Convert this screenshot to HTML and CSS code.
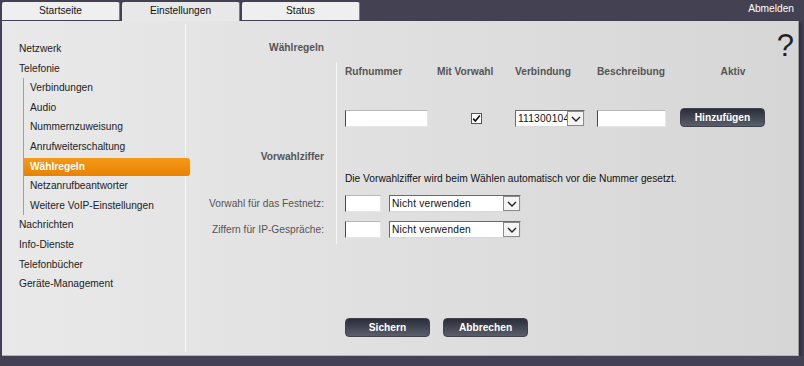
FILE: index.html
```html
<!DOCTYPE html>
<html lang="de">

<head>
    <meta charset="UTF-8">
    <title>Wählregeln</title>
    <link rel="stylesheet" href="styles.css">
</head>

<body>
    <div class="topbar">
        <nav class="tabs">
            <a class="tab">Startseite</a>
            <a class="tab tab--active">Einstellungen</a>
            <a class="tab">Status</a>
        </nav>
        <a class="logout">Abmelden</a>
    </div>

    <div class="panel">
        <aside class="sidebar">
            <ul class="menu">
                <li>Netzwerk</li>
                <li>Telefonie
                    <ul class="submenu">
                        <li>Verbindungen</li>
                        <li>Audio</li>
                        <li>Nummernzuweisung</li>
                        <li>Anrufweiterschaltung</li>
                        <li class="active">Wählregeln</li>
                        <li>Netzanrufbeantworter</li>
                        <li>Weitere VoIP-Einstellungen</li>
                    </ul>
                </li>
                <li>Nachrichten</li>
                <li>Info-Dienste</li>
                <li>Telefonbücher</li>
                <li>Geräte-Management</li>
            </ul>
        </aside>

        <main class="content">
            <span class="help">?</span>

            <div class="form-row row-title">
                <div class="label bold">Wählregeln</div>
                <div class="field plain"></div>
            </div>

            <!-- dial rules table -->
            <div class="form-row row-rules">
                <div class="label"></div>
                <div class="field rules">
                    <div class="rules__head">
                        <span>Rufnummer</span>
                        <span>Mit Vorwahl</span>
                        <span>Verbindung</span>
                        <span>Beschreibung</span>
                        <span class="center">Aktiv</span>
                    </div>
                    <div class="rules__entry">
                        <span><input class="text-input w-number" type="text"></span>
                        <span class="center">
                            <span class="checkbox">
                                <svg width="9" height="9" viewBox="0 0 9 9">
                                    <path d="M1.2 4.6 L3.4 7 L7.8 1.6" fill="none" stroke="#111" stroke-width="1.6" />
                                </svg>
                            </span>
                        </span>
                        <span>
                            <span class="select w-line">
                                <span class="select__value">111300104</span>
                                <span class="select__arrow">
                                    <svg width="10" height="6" viewBox="0 0 10 6">
                                        <path d="M1 1 L5 5 L9 1" fill="none" stroke="#222" stroke-width="1.4" />
                                    </svg>
                                </span>
                            </span>
                        </span>
                        <span><input class="text-input w-desc" type="text"></span>
                        <span><button class="btn btn--add">Hinzufügen</button></span>
                    </div>
                </div>
            </div>

            <div class="form-row row-section">
                <div class="label bold">Vorwahlziffer</div>
                <div class="field"></div>
            </div>

            <div class="form-row row-note">
                <div class="label"></div>
                <div class="field note">Die Vorwahlziffer wird beim Wählen automatisch vor die Nummer gesetzt.</div>
            </div>

            <div class="form-row row-setting">
                <div class="label">Vorwahl für das Festnetz:</div>
                <div class="field">
                    <input class="text-input w-digit" type="text">
                    <span class="select w-option">
                        <span class="select__value">Nicht verwenden</span>
                        <span class="select__arrow">
                            <svg width="10" height="6" viewBox="0 0 10 6">
                                <path d="M1 1 L5 5 L9 1" fill="none" stroke="#222" stroke-width="1.4" />
                            </svg>
                        </span>
                    </span>
                </div>
            </div>

            <div class="form-row row-setting">
                <div class="label">Ziffern für IP-Gespräche:</div>
                <div class="field">
                    <input class="text-input w-digit" type="text">
                    <span class="select w-option">
                        <span class="select__value">Nicht verwenden</span>
                        <span class="select__arrow">
                            <svg width="10" height="6" viewBox="0 0 10 6">
                                <path d="M1 1 L5 5 L9 1" fill="none" stroke="#222" stroke-width="1.4" />
                            </svg>
                        </span>
                    </span>
                </div>
            </div>

            <div class="form-row row-actions">
                <div class="label"></div>
                <div class="field plain actions">
                    <button class="btn">Sichern</button>
                    <button class="btn">Abbrechen</button>
                </div>
            </div>
        </main>
    </div>
</body>

</html>
```

FILE: styles.css
```css
*,
*::before,
*::after {
    box-sizing: border-box;
}

body {
    margin: 0;
    background: rgb(67, 65, 82);
    font-family: "Liberation Sans", Arial, sans-serif;
    font-size: 10.2px;
    color: #222;
}

ul {
    list-style: none;
    margin: 0;
    padding: 0;
}

/* top bar with tabs */
.topbar {
    height: 21px;
    display: flex;
    justify-content: space-between;
}

.tabs {
    display: flex;
    gap: 2px;
    padding-left: 2px;
    align-items: flex-start;
}

.tab {
    width: 118px;
    height: 18px;
    margin-top: 2px;
    line-height: 18px;
    text-align: center;
    color: #111;
    background: #efefef;
    border-radius: 2px 2px 0 0;
    border-right: 1px solid #7c7c86;
}

.tab--active {
    height: 19px;
    background: #e8e8e8;
}

.logout {
    color: #fff;
    line-height: 18px;
    padding-right: 10px;
}

/* main panel */
.panel {
    margin-left: 2px;
    width: 797px;
    height: 335px;
    display: flex;
    background: linear-gradient(to right, #e9e9e9, #d6d6d6);
    border-right: 1px solid #9c9c9c;
    border-bottom: 1px solid #b4b4b4;
    box-shadow: 2px 2px 3px rgba(0, 0, 0, 0.35);
}

/* sidebar menu */
.sidebar {
    width: 184px;
    flex-shrink: 0;
    margin: 3px 0 3px;
    padding: 15px 0 0 17px;
    border-right: 1px solid #fafafa;
    line-height: 19.6px;
}

.submenu {
    margin-left: 4px;
    border-left: 1px solid #a0a0a0;
}

.submenu li {
    padding-left: 6px;
}

.submenu li.active {
    line-height: 18px;
    margin: 1px -5px 0.6px 0;
    color: #fff;
    font-weight: bold;
    background: linear-gradient(#f49a18, #e88200);
    border-radius: 0 3px 3px 0;
}

/* content */
.content {
    position: relative;
    flex: 1;
    padding-top: 19px;
    color: #555;
}

.help {
    position: absolute;
    top: 7px;
    right: 4px;
    font-size: 31px;
    color: #222;
}

.form-row {
    display: flex;
}

.label {
    width: 150px;
    flex-shrink: 0;
    padding-right: 12px;
    text-align: right;
}

.bold {
    font-weight: bold;
}

.field {
    flex: 1;
    padding-left: 8px;
    border-left: 1px solid #f6f6f6;
}

.field.plain {
    border-color: transparent;
}

.row-title {
    line-height: 16px;
    margin-bottom: 6px;
}

.row-rules {
    height: 85px;
}

.rules__head,
.rules__entry {
    display: grid;
    grid-template-columns: 92px 78px 82px 84px 104px;
}

.rules__head {
    padding-top: 2px;
    line-height: 16px;
    font-weight: bold;
}

.rules__entry {
    margin-top: 28px;
    height: 19px;
    align-items: start;
}

.rules__entry > span {
    display: flex;
    padding-top: 2px;
}

.center {
    text-align: center;
    justify-content: center;
}

.row-section {
    height: 19px;
    line-height: 19px;
}

.row-note {
    height: 26px;
    line-height: 26px;
}

.note {
    color: #111;
}

.row-setting {
    height: 26px;
}

.row-setting .label {
    padding-top: 3px;
    line-height: 17px;
}

.row-setting .field {
    padding-top: 3px;
    display: flex;
    gap: 8px;
}

.row-actions {
    margin-top: 74px;
}

.actions {
    display: flex;
    gap: 13px;
}

/* form controls */
.text-input {
    height: 17px;
    margin: 0;
    padding: 0 2px;
    font: inherit;
    background: #fff;
    border: 1px solid;
    border-color: #b8b8b8 #e6e6e6 #e6e6e6 #4a4a4a;
}

.w-number {
    width: 83px;
}

.w-desc {
    width: 69px;
}

.w-digit {
    width: 36px;
}

.checkbox {
    width: 11px;
    height: 11px;
    margin-top: 3px;
    display: flex;
    align-items: center;
    justify-content: center;
    background: #fff;
    border: 1px solid #555;
}

.select {
    height: 17px;
    display: flex;
    align-items: center;
    background: #fff;
    border: 1px solid;
    border-color: #6a6a6a #d8d8d8 #d8d8d8 #6a6a6a;
    color: #111;
}

.w-line {
    width: 70px;
}

.w-option {
    width: 132px;
}

.select__value {
    flex: 1;
    overflow: hidden;
    white-space: nowrap;
    padding-left: 2px;
    letter-spacing: 0.2px;
}

.select__arrow {
    width: 17px;
    height: 15px;
    flex-shrink: 0;
    display: flex;
    align-items: center;
    justify-content: center;
    background: #f4f4f4;
    border: 1px solid #8a8a8a;
}

.btn {
    width: 85px;
    height: 19px;
    padding: 0;
    font: inherit;
    font-weight: bold;
    color: #fff;
    background: linear-gradient(#2b2e39, #5a5e6b);
    border: 1px solid #40434e;
    border-radius: 4px;
}

.btn--add {
    margin-left: -1px;
    margin-top: -2px;
}
```
